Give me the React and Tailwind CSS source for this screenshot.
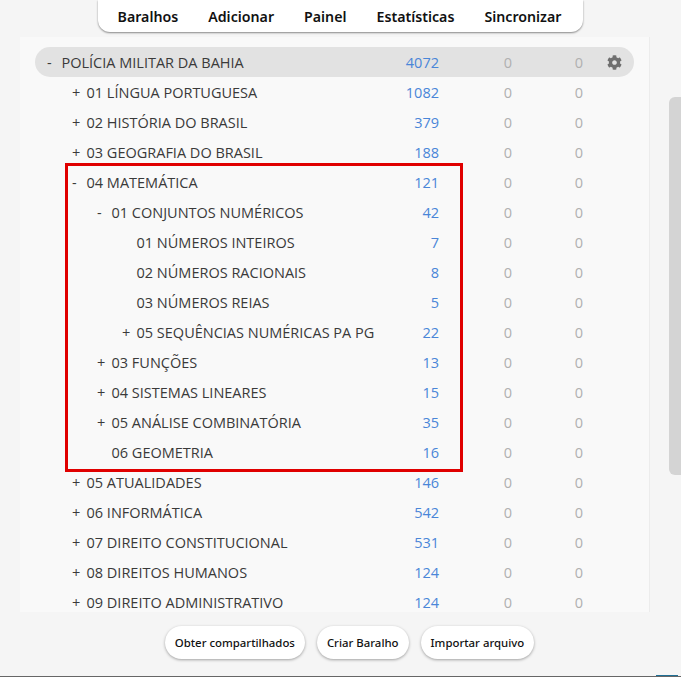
import { FaCog } from "react-icons/fa";

const ROWS = [
  { d: 0, m: "-", t: "POLÍCIA MILITAR DA BAHIA", n: 4072, sel: true },
  { d: 1, m: "+", t: "01 LÍNGUA PORTUGUESA", n: 1082 },
  { d: 1, m: "+", t: "02 HISTÓRIA DO BRASIL", n: 379 },
  { d: 1, m: "+", t: "03 GEOGRAFIA DO BRASIL", n: 188 },
  { d: 1, m: "-", t: "04 MATEMÁTICA", n: 121 },
  { d: 2, m: "-", t: "01 CONJUNTOS NUMÉRICOS", n: 42 },
  { d: 3, m: "", t: "01 NÚMEROS INTEIROS", n: 7 },
  { d: 3, m: "", t: "02 NÚMEROS RACIONAIS", n: 8 },
  { d: 3, m: "", t: "03 NÚMEROS REIAS", n: 5 },
  { d: 3, m: "+", t: "05 SEQUÊNCIAS NUMÉRICAS PA PG", n: 22 },
  { d: 2, m: "+", t: "03 FUNÇÕES", n: 13 },
  { d: 2, m: "+", t: "04 SISTEMAS LINEARES", n: 15 },
  { d: 2, m: "+", t: "05 ANÁLISE COMBINATÓRIA", n: 35 },
  { d: 2, m: "", t: "06 GEOMETRIA", n: 16 },
  { d: 1, m: "+", t: "05 ATUALIDADES", n: 146 },
  { d: 1, m: "+", t: "06 INFORMÁTICA", n: 542 },
  { d: 1, m: "+", t: "07 DIREITO CONSTITUCIONAL", n: 531 },
  { d: 1, m: "+", t: "08 DIREITOS HUMANOS", n: 124 },
  { d: 1, m: "+", t: "09 DIREITO ADMINISTRATIVO", n: 124 },
];
const INDENT = ["pl-0", "pl-[25px]", "pl-[50px]", "pl-[75px]"];

function Row({ r }) {
  return (
    <div className={`flex items-center h-[30px] shrink-0 pl-[12px] pt-[2px] rounded-[15px] ${r.sel ? "bg-[#e2e2e2]" : ""}`}>
      <div className={`flex flex-1 min-w-0 whitespace-nowrap ${INDENT[r.d]}`}>
        <span className="w-[14.5px] shrink-0">{r.m}</span>
        <span>{r.t}</span>
      </div>
      <span className="w-[60px] text-right text-[#4a86d8]">{r.n}</span>
      <span className="w-[73px] text-right text-[#b0b0b0]">0</span>
      <span className="w-[71px] text-right text-[#b0b0b0]">0</span>
      <span className="w-[51px] flex justify-center pl-[11px] -mt-[2px]">{r.sel && <FaCog className="w-[15px] h-[15px] text-[#6f6f6f]" />}</span>
    </div>
  );
}

function Btn({ children }) {
  return (
    <button className="h-[33px] px-[10px] rounded-full bg-white text-[11.4px] font-medium text-[#111] shadow-[0_1px_3px_rgba(0,0,0,0.35)]">
      {children}
    </button>
  );
}

export default function App() {
  return (
    <div className="relative h-[677px] w-[681px] overflow-hidden bg-[#f5f5f5] border-b border-[#666] flex flex-col font-['Open_Sans','Noto_Sans',sans-serif] text-[14.5px] text-[#3a3a3a]">
      <nav className="self-center w-[485px] h-[32px] shrink-0 flex items-center justify-center gap-[30px] pt-[1px] pr-[2px] bg-white rounded-b-[12px] shadow-[0_1px_2px_rgba(0,0,0,0.45)] font-['Noto_Sans',sans-serif] font-semibold text-[14.2px] text-[#111] z-10">
        <span>Baralhos</span>
        <span>Adicionar</span>
        <span>Painel</span>
        <span>Estatísticas</span>
        <span>Sincronizar</span>
      </nav>
      <main className="mx-[20px] mt-[5px] w-[630px] h-[575px] shrink-0 overflow-hidden bg-[#f9f9f9] border-r border-[#ececec] pt-[10px] px-[15px] flex flex-col">
        {ROWS.map((r, i) => <Row key={i} r={r} />)}
      </main>
      <footer className="flex justify-center gap-[12px] mt-[14px] pl-[18px] font-['Noto_Sans',sans-serif]">
        <Btn>Obter compartilhados</Btn>
        <Btn>Criar Baralho</Btn>
        <Btn>Importar arquivo</Btn>
      </footer>
      <div className="absolute right-0 top-[97px] w-[12px] h-[378px] rounded-l-[6px] bg-[#d4d4d4]" />
      <div className="absolute left-[65px] top-[163px] w-[398px] h-[309px] border-[3px] border-[#e00000]" />
      <div className="absolute right-[3px] bottom-0 w-[22px] h-px bg-[#1f6f95]" />
    </div>
  );
}
